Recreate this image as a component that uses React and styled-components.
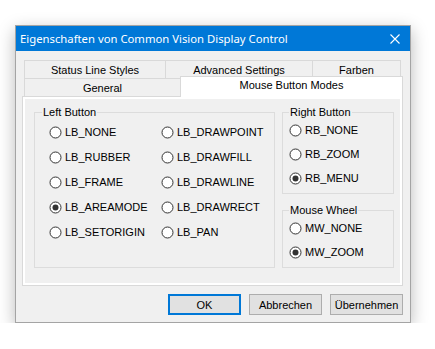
import React, { useState } from 'react'
import styled, { createGlobalStyle } from 'styled-components'

const GlobalStyle = createGlobalStyle`
  html, body {
    margin: 0;
    background: #ffffff;
  }
  body {
    font-family: 'Liberation Sans', Arial, sans-serif;
    font-size: 11px;
    color: #000;
  }
`

const Dialog = styled.div`
  box-sizing: border-box;
  width: 396px;
  height: 298px;
  margin: 25px 0 0 15px;
  border: 1px solid #a4a4a4;
  background: #f0f0f0;
  box-shadow: 0 5px 16px rgba(0, 0, 0, 0.28);
  display: flex;
  flex-direction: column;
`

const TitleBar = styled.div`
  height: 25px;
  background: #0078d7;
  color: #fff;
  display: flex;
  align-items: center;
  padding-left: 4px;
  font-family: 'Segoe UI', 'Noto Sans', sans-serif;
  font-size: 11.3px;
`

const Title = styled.span`
  flex: 1;
  white-space: nowrap;
`

const CloseButton = styled.div`
  width: 30px;
  height: 25px;
  display: flex;
  align-items: center;
  justify-content: center;
`

const Body = styled.div`
  flex: 1;
  padding: 9px 7px 7px 6px;
  display: flex;
  flex-direction: column;
`

const TabStrip = styled.div`
  padding: 0 2px;
`

const TabRow = styled.div`
  display: flex;
  height: 18px;
`

const Tab = styled.div`
  box-sizing: border-box;
  width: ${(p) => (p.$w ? `${p.$w}px` : 'auto')};
  flex: ${(p) => (p.$w ? 'none' : '1')};
  border: 1px solid #d9d9d9;
  border-bottom: none;
  border-right: ${(p) => (p.$last ? '1px solid #d9d9d9' : 'none')};
  display: flex;
  align-items: center;
  justify-content: center;
  white-space: nowrap;
`

const ActiveTab = styled(Tab)`
  position: relative;
  z-index: 1;
  background: #fff;
  border-right: 1px solid #d9d9d9;
  margin: -2px -2px -1px 0;
  height: 21px;
  padding-bottom: 4px;
`

const TabBody = styled.div`
  box-sizing: border-box;
  height: 190px;
  border: 1px solid #d9d9d9;
  background: #fff;
  padding: 2px;
`

const Page = styled.div`
  height: 100%;
  box-sizing: border-box;
  background: #f0f0f0;
  padding: 8px 6px 15px 9px;
  display: flex;
  gap: 7px;
`

const Group = styled.fieldset`
  margin: 0;
  min-width: 0;
  box-sizing: border-box;
  border: 1px solid #dcdcdc;
  padding: 0;
  width: ${(p) => p.$w}px;
  flex: ${(p) => (p.$grow ? '1' : 'none')};
`

const Legend = styled.legend`
  padding: 0 1px;
  margin-left: ${(p) => p.$indent}px;
  line-height: 11px;
`

const RightColumn = styled.div`
  display: flex;
  flex-direction: column;
  gap: 11px;
`

const Grid = styled.div`
  display: grid;
  grid-template-columns: 112px 1fr;
  grid-auto-rows: 25px;
  padding: 1.5px 0 0 14px;
`

const Stack = styled.div`
  padding: 0 0 3px 6px;
`

const Row = styled.label`
  display: flex;
  align-items: center;
  gap: 3px;
  height: ${(p) => p.$h || 25}px;
  white-space: nowrap;
`

const Footer = styled.div`
  display: flex;
  justify-content: flex-end;
  gap: 8px;
  margin-top: 8px;
`

const Button = styled.div`
  box-sizing: border-box;
  width: 73px;
  height: 21px;
  background: #e1e1e1;
  border: ${(p) => (p.$default ? '2px solid #0078d7' : '1px solid #adadad')};
  display: flex;
  align-items: center;
  justify-content: center;
`

const Radio = ({ checked }) => (
  <svg width="13" height="13" viewBox="0 0 13 13">
    <circle cx="6.5" cy="6.5" r="5.5" fill="#fff" stroke="#333" strokeWidth="1" />
    {checked && <circle cx="6.5" cy="6.5" r="3" fill="#333" />}
  </svg>
)

const Option = ({ label, checked, h }) => (
  <Row $h={h}>
    <Radio checked={checked} />
    <span>{label}</span>
  </Row>
)

const leftOptions = [
  'LB_NONE', 'LB_DRAWPOINT',
  'LB_RUBBER', 'LB_DRAWFILL',
  'LB_FRAME', 'LB_DRAWLINE',
  'LB_AREAMODE', 'LB_DRAWRECT',
  'LB_SETORIGIN', 'LB_PAN',
]

export default function App() {
  const [left] = useState('LB_AREAMODE')
  const [right] = useState('RB_MENU')
  const [wheel] = useState('MW_ZOOM')

  return (
    <>
      <GlobalStyle />
      <Dialog>
        <TitleBar>
          <Title>Eigenschaften von Common Vision Display Control</Title>
          <CloseButton>
            <svg width="10" height="10" viewBox="0 0 10 10">
              <path d="M0.5 0.5 L9.5 9.5 M9.5 0.5 L0.5 9.5" stroke="#fff" strokeWidth="1.1" />
            </svg>
          </CloseButton>
        </TitleBar>
        <Body>
          <TabStrip>
            <TabRow>
              <Tab $w={141}>Status Line Styles</Tab>
              <Tab $w={147}>Advanced Settings</Tab>
              <Tab $last>Farben</Tab>
            </TabRow>
            <TabRow>
              <Tab $w={156}>General</Tab>
              <ActiveTab>Mouse Button Modes</ActiveTab>
            </TabRow>
          </TabStrip>
          <TabBody>
            <Page>
              <Group $w={241}>
                <Legend $indent={7}>Left Button</Legend>
                <Grid>
                  {leftOptions.map((o) => (
                    <Option key={o} label={o} checked={o === left} />
                  ))}
                </Grid>
              </Group>
              <RightColumn>
                <Group $w={112}>
                  <Legend $indent={6}>Right Button</Legend>
                  <Stack>
                    {['RB_NONE', 'RB_ZOOM', 'RB_MENU'].map((o) => (
                      <Option key={o} label={o} h={24} checked={o === right} />
                    ))}
                  </Stack>
                </Group>
                <Group $w={112} $grow>
                  <Legend $indent={6}>Mouse Wheel</Legend>
                  <Stack>
                    {['MW_NONE', 'MW_ZOOM'].map((o) => (
                      <Option key={o} label={o} h={24} checked={o === wheel} />
                    ))}
                  </Stack>
                </Group>
              </RightColumn>
            </Page>
          </TabBody>
          <Footer>
            <Button $default>OK</Button>
            <Button>Abbrechen</Button>
            <Button>Übernehmen</Button>
          </Footer>
        </Body>
      </Dialog>
    </>
  )
}
